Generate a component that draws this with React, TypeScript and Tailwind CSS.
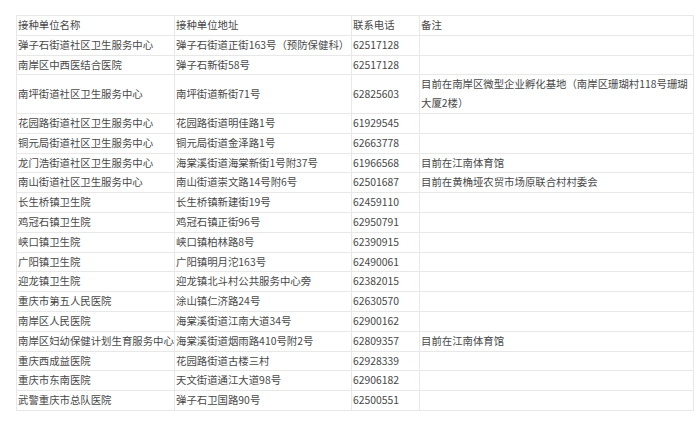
const rows: [string, string, string, string][] = [
  ["弹子石街道社区卫生服务中心", "弹子石街道正街163号（预防保健科）", "62517128", ""],
  ["南岸区中西医结合医院", "弹子石新街58号", "62517128", ""],
  ["南坪街道社区卫生服务中心", "南坪街道新街71号", "62825603", "目前在南岸区微型企业孵化基地（南岸区珊瑚村118号珊瑚大厦2楼）"],
  ["花园路街道社区卫生服务中心", "花园路街道明佳路1号", "61929545", ""],
  ["铜元局街道社区卫生服务中心", "铜元局街道金泽路1号", "62663778", ""],
  ["龙门浩街道社区卫生服务中心", "海棠溪街道海棠新街1号附37号", "61966568", "目前在江南体育馆"],
  ["南山街道社区卫生服务中心", "南山街道崇文路14号附6号", "62501687", "目前在黄桷垭农贸市场原联合村村委会"],
  ["长生桥镇卫生院", "长生桥镇新建街19号", "62459110", ""],
  ["鸡冠石镇卫生院", "鸡冠石镇正街96号", "62950791", ""],
  ["峡口镇卫生院", "峡口镇柏林路8号", "62390915", ""],
  ["广阳镇卫生院", "广阳镇明月沱163号", "62490061", ""],
  ["迎龙镇卫生院", "迎龙镇北斗村公共服务中心旁", "62382015", ""],
  ["重庆市第五人民医院", "涂山镇仁济路24号", "62630570", ""],
  ["南岸区人民医院", "海棠溪街道江南大道34号", "62900162", ""],
  ["南岸区妇幼保健计划生育服务中心", "海棠溪街道烟雨路410号附2号", "62809357", "目前在江南体育馆"],
  ["重庆西成益医院", "花园路街道古楼三村", "62928339", ""],
  ["重庆市东南医院", "天文街道通江大道98号", "62906182", ""],
  ["武警重庆市总队医院", "弹子石卫国路90号", "62500551", ""],
]

const cell = "border border-[#e8e8e8] pl-px pr-0.5 py-0 align-middle font-normal text-left"

export default function App() {
  return (
    <div className="w-[700px] h-[421px] bg-white pt-[15px] pl-4 font-['Noto_Sans_CJK_SC',sans-serif] text-[10.4px] leading-[18.8px] text-[#484848]">
      <table className="table-fixed border-collapse w-[677px]">
        <colgroup>
          <col className="w-[158px]" />
          <col className="w-[177px]" />
          <col className="w-[68px]" />
          <col className="w-[274px]" />
        </colgroup>
        <thead>
          <tr>
            <th className={cell}>接种单位名称</th>
            <th className={cell}>接种单位地址</th>
            <th className={cell}>联系电话</th>
            <th className={cell}>备注</th>
          </tr>
        </thead>
        <tbody>
          {rows.map((r) => (
            <tr key={r[0]}>
              <td className={cell + " whitespace-nowrap"}>{r[0]}</td>
              <td className={cell + " whitespace-nowrap"}>{r[1]}</td>
              <td className={cell}>{r[2]}</td>
              <td className={cell}>{r[3]}</td>
            </tr>
          ))}
        </tbody>
      </table>
    </div>
  )
}
